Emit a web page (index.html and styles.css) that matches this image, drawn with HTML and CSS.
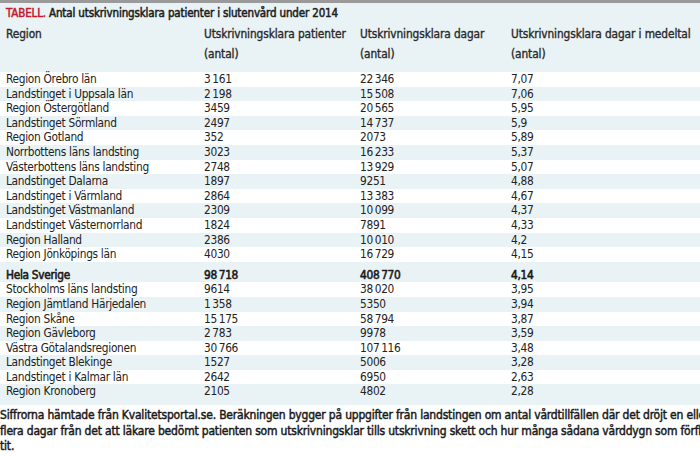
FILE: index.html
```html
<!DOCTYPE html>
<html lang="sv">
<head>
<meta charset="utf-8">
<link rel="stylesheet" href="styles.css">
</head>
<body>
<div class="page">
  <div class="head">
    <div class="title"><span class="tag">TABELL.</span> Antal utskrivningsklara patienter i slutenvård under 2014</div>
    <div class="hrow">
      <div class="c1">Region</div>
      <div class="c2">Utskrivningsklara patienter<br>(antal)</div>
      <div class="c3">Utskrivningsklara dagar<br>(antal)</div>
      <div class="c4">Utskrivningsklara dagar i medeltal<br>(antal)</div>
    </div>
  </div>
  <div class="body">
    <div class="row"><div class="c1">Region Örebro län</div><div class="c2">3&#8201;161</div><div class="c3">22&#8201;346</div><div class="c4">7,07</div></div>
    <div class="row alt"><div class="c1">Landstinget i Uppsala län</div><div class="c2">2&#8201;198</div><div class="c3">15&#8201;508</div><div class="c4">7,06</div></div>
    <div class="row"><div class="c1">Region Östergötland</div><div class="c2">3459</div><div class="c3">20&#8201;565</div><div class="c4">5,95</div></div>
    <div class="row alt"><div class="c1">Landstinget Sörmland</div><div class="c2">2497</div><div class="c3">14&#8201;737</div><div class="c4">5,9</div></div>
    <div class="row"><div class="c1">Region Gotland</div><div class="c2">352</div><div class="c3">2073</div><div class="c4">5,89</div></div>
    <div class="row alt"><div class="c1">Norrbottens läns landsting</div><div class="c2">3023</div><div class="c3">16&#8201;233</div><div class="c4">5,37</div></div>
    <div class="row"><div class="c1">Västerbottens läns landsting</div><div class="c2">2748</div><div class="c3">13&#8201;929</div><div class="c4">5,07</div></div>
    <div class="row alt"><div class="c1">Landstinget Dalarna</div><div class="c2">1897</div><div class="c3">9251</div><div class="c4">4,88</div></div>
    <div class="row"><div class="c1">Landstinget i Värmland</div><div class="c2">2864</div><div class="c3">13&#8201;383</div><div class="c4">4,67</div></div>
    <div class="row alt"><div class="c1">Landstinget Västmanland</div><div class="c2">2309</div><div class="c3">10&#8201;099</div><div class="c4">4,37</div></div>
    <div class="row"><div class="c1">Landstinget Västernorrland</div><div class="c2">1824</div><div class="c3">7891</div><div class="c4">4,33</div></div>
    <div class="row alt"><div class="c1">Region Halland</div><div class="c2">2386</div><div class="c3">10&#8201;010</div><div class="c4">4,2</div></div>
    <div class="row"><div class="c1">Region Jönköpings län</div><div class="c2">4030</div><div class="c3">16&#8201;729</div><div class="c4">4,15</div></div>
    <div class="row alt total"><div class="c1">Hela Sverige</div><div class="c2">98&#8201;718</div><div class="c3">408&#8201;770</div><div class="c4">4,14</div></div>
    <div class="row"><div class="c1">Stockholms läns landsting</div><div class="c2">9614</div><div class="c3">38&#8201;020</div><div class="c4">3,95</div></div>
    <div class="row alt"><div class="c1">Region Jämtland Härjedalen</div><div class="c2">1&#8201;358</div><div class="c3">5350</div><div class="c4">3,94</div></div>
    <div class="row"><div class="c1">Region Skåne</div><div class="c2">15&#8201;175</div><div class="c3">58&#8201;794</div><div class="c4">3,87</div></div>
    <div class="row alt"><div class="c1">Region Gävleborg</div><div class="c2">2&#8201;783</div><div class="c3">9978</div><div class="c4">3,59</div></div>
    <div class="row"><div class="c1">Västra Götalandsregionen</div><div class="c2">30&#8201;766</div><div class="c3">107&#8201;116</div><div class="c4">3,48</div></div>
    <div class="row alt"><div class="c1">Landstinget Blekinge</div><div class="c2">1527</div><div class="c3">5006</div><div class="c4">3,28</div></div>
    <div class="row"><div class="c1">Landstinget i Kalmar län</div><div class="c2">2642</div><div class="c3">6950</div><div class="c4">2,63</div></div>
    <div class="row alt last"><div class="c1">Region Kronoberg</div><div class="c2">2105</div><div class="c3">4802</div><div class="c4">2,28</div></div>
  </div>
  <div class="note">
    <div class="line">Siffrorna hämtade från Kvalitetsportal.se. Beräkningen bygger på uppgifter från landstingen om antal vårdtillfällen där det dröjt en eller</div>
    <div class="line">flera dagar från det att läkare bedömt patienten som utskrivningsklar tills utskrivning skett och hur många sådana vårddygn som förflu-</div>
    <div class="line">tit.</div>
  </div>
</div>
</body>
</html>
```
FILE: styles.css
```css
html, body {
  margin: 0;
  padding: 0;
  background: #ffffff;
  overflow: hidden;
}
.page {
  width: 700px;
  height: 456px;
  overflow: hidden;
  font-family: "DejaVu Sans Condensed", sans-serif;
  font-size: 11.8px;
  letter-spacing: -0.3px;
  color: #222222;
  border-top: 3px solid #9a9a9a;
  box-sizing: border-box;
}
.head {
  background: #e9f2f5;
  height: 69px;
  padding: 3px 0 0 0;
  box-sizing: border-box;
}
.title {
  font-size: 11.5px;
  letter-spacing: -0.15px;
  -webkit-text-stroke: 0.5px currentColor;
  line-height: 14px;
  padding-left: 6px;
  white-space: nowrap;
  color: #1e1e1e;
}
.tag {
  color: #c41a2e;
}
.hrow {
  display: flex;
  line-height: 20px;
  font-size: 11.8px;
  letter-spacing: -0.1px;
  -webkit-text-stroke: 0.35px currentColor;
  color: #2a2a2a;
  margin-top: 4px;
  white-space: nowrap;
}
.row {
  display: flex;
  height: 14.6px;
  line-height: 14.6px;
  white-space: nowrap;
}
.alt {
  background: #e9f2f5;
}
.total {
  height: 20.6px;
  padding-top: 6px;
  box-sizing: border-box;
  font-size: 11.8px;
  letter-spacing: -0.3px;
  -webkit-text-stroke: 0.55px currentColor;
  color: #1a1a1a;
}
.last {
  height: 21px;
  padding-bottom: 6px;
  box-sizing: border-box;
}
.c1 {
  width: 204px;
  flex-shrink: 0;
  padding-left: 6px;
  box-sizing: border-box;
}
.c2 {
  width: 156px;
  flex-shrink: 0;
}
.c3 {
  width: 151px;
  flex-shrink: 0;
}
.c4 {
  flex: 1;
  min-width: 0;
}
.note {
  padding-top: 3px;
  font-size: 12px;
  letter-spacing: -0.19px;
  line-height: 15.5px;
  -webkit-text-stroke: 0.45px currentColor;
  color: #1a1a1a;
}
.line {
  white-space: nowrap;
}
```
